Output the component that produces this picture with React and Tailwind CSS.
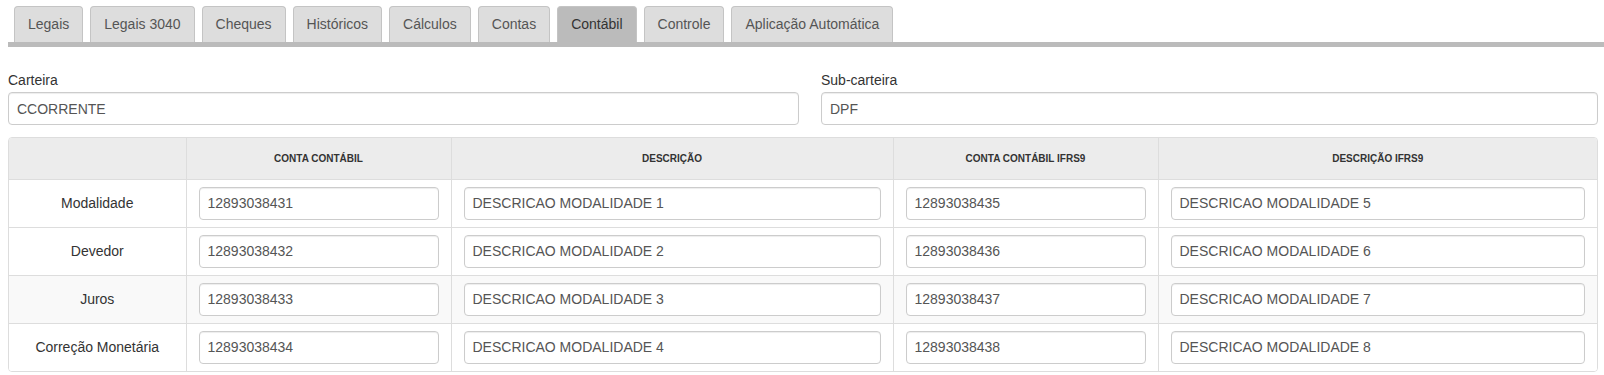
import { useState } from 'react'

// Aba "Contábil" — contas contábeis por carteira / sub-carteira

const TABS = [
  'Legais',
  'Legais 3040',
  'Cheques',
  'Históricos',
  'Cálculos',
  'Contas',
  'Contábil',
  'Controle',
  'Aplicação Automática',
]

const ROWS = [
  { label: 'Modalidade', conta: '12893038431', desc: 'DESCRICAO MODALIDADE 1', ifrs: '12893038435', descIfrs: 'DESCRICAO MODALIDADE 5' },
  { label: 'Devedor', conta: '12893038432', desc: 'DESCRICAO MODALIDADE 2', ifrs: '12893038436', descIfrs: 'DESCRICAO MODALIDADE 6' },
  { label: 'Juros', conta: '12893038433', desc: 'DESCRICAO MODALIDADE 3', ifrs: '12893038437', descIfrs: 'DESCRICAO MODALIDADE 7' },
  { label: 'Correção Monetária', conta: '12893038434', desc: 'DESCRICAO MODALIDADE 4', ifrs: '12893038438', descIfrs: 'DESCRICAO MODALIDADE 8' },
]

function Field({ value }) {
  return (
    <input
      type="text"
      defaultValue={value}
      className="w-full h-[33px] px-2 rounded-[4px] border border-[#ccc] bg-white text-[14px] text-[#555] shadow-[inset_0_1px_1px_rgba(0,0,0,0.075)] focus:outline-none"
    />
  )
}

export default function App() {
  const [active, setActive] = useState('Contábil')

  return (
    <div className="pl-2 pr-[6px] text-[14px] text-[#333] bg-white" style={{ fontFamily: '"Liberation Sans", Arial, sans-serif' }}>
      {/* abas */}
      <ul className="flex gap-[7px] pl-[6px] pt-[6px] border-b-[5px] border-[#bbb] mr-[-6px]">
        {TABS.map(t => (
          <li key={t}>
            <button
              type="button"
              onClick={() => setActive(t)}
              className={`h-[36px] px-[13px] border border-b-0 border-[#c4c4c4] rounded-t-[4px] text-[14px] ${
                active === t ? 'bg-[#bbb] text-[#333]' : 'bg-[#ddd] text-[#555]'
              }`}
            >
              {t}
            </button>
          </li>
        ))}
      </ul>

      {/* carteira / sub-carteira */}
      <div className="grid grid-cols-[791px_1fr] gap-[22px] mt-[23px]">
        <div>
          <label className="block leading-5 mb-[2px]">Carteira</label>
          <Field value="CCORRENTE" />
        </div>
        <div>
          <label className="block leading-5 mb-[2px]">Sub-carteira</label>
          <Field value="DPF" />
        </div>
      </div>

      {/* tabela */}
      <div className="mt-3 border border-[#ddd] rounded-[4px] overflow-hidden">
        <table className="w-full border-collapse table-fixed">
          <colgroup>
            <col className="w-[177px]" />
            <col className="w-[265px]" />
            <col className="w-[442px]" />
            <col className="w-[265px]" />
            <col />
          </colgroup>
          <thead>
            <tr className="bg-[#ececec] h-[41px]">
              <th className="border-b border-[#ddd]"></th>
              <th className="border-l border-b border-[#ddd] text-[10px] font-bold uppercase text-[#333]">Conta Contábil</th>
              <th className="border-l border-b border-[#ddd] text-[10px] font-bold uppercase text-[#333]">Descrição</th>
              <th className="border-l border-b border-[#ddd] text-[10px] font-bold uppercase text-[#333]">Conta Contábil IFRS9</th>
              <th className="border-l border-b border-[#ddd] text-[10px] font-bold uppercase text-[#333]">Descrição IFRS9</th>
            </tr>
          </thead>
          <tbody>
            {ROWS.map((r, i) => (
              <tr key={r.label} className={`h-[48px] ${i === 2 ? 'bg-[#f9f9f9]' : 'bg-white'}`}>
                <td className={`text-center ${i < ROWS.length - 1 ? 'border-b' : ''} border-[#ddd]`}>{r.label}</td>
                <td className={`px-3 border-l ${i < ROWS.length - 1 ? 'border-b' : ''} border-[#ddd]`}><Field value={r.conta} /></td>
                <td className={`px-3 border-l ${i < ROWS.length - 1 ? 'border-b' : ''} border-[#ddd]`}><Field value={r.desc} /></td>
                <td className={`px-3 border-l ${i < ROWS.length - 1 ? 'border-b' : ''} border-[#ddd]`}><Field value={r.ifrs} /></td>
                <td className={`px-3 border-l ${i < ROWS.length - 1 ? 'border-b' : ''} border-[#ddd]`}><Field value={r.descIfrs} /></td>
              </tr>
            ))}
          </tbody>
        </table>
      </div>
    </div>
  )
}
